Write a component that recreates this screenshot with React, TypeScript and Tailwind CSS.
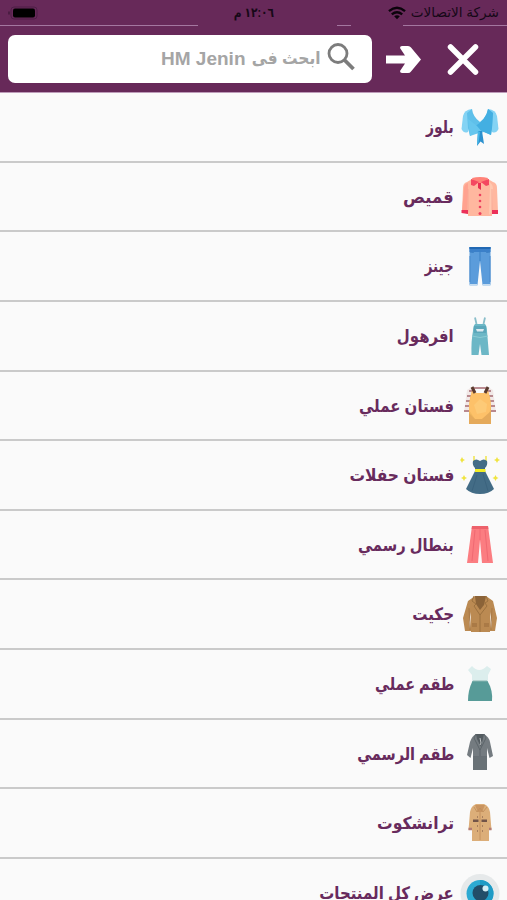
import type { ReactNode } from "react";

type Category = {
	label: string;
	textClass: string;
	icon: ReactNode;
};

const Blouse = () => (
	<>
		<path d="M12 1Q4 2 3 8L1.500 21Q4 26 8 24L11 13Z" fill="#84d3f4" />
		<path d="M28 1Q36 2 37 8L38.500 21Q36 26 32 24L29 13Z" fill="#84d3f4" />
		<path d="M12 1Q13 9 20 14Q27 9 28 1L33 5L32 20L31 27L24 24L20 25L16 24L10 28L8 20L7 5Z" fill="#5fc0ea" />
		<path d="M28 1L33 5L32 20L31 27L24 24L14 19Q26 12 28 1Z" fill="#43afe2" />
		<path d="M8 11L17 18L22 24L10 28Z" fill="#66c6ee" />
		<path d="M18 23L22 23L24 36L20.500 33.500L17 38Z" fill="#2c91ce" />
		<path d="M18 23L20 24L18.500 35L17 37Z" fill="#49b8e8" />
	</>
);

const Shirt = () => (
	<>
		<path d="M12 2L7 5Q3 6 3 11L2 35L8 37V39H32V37L38 35L37 11Q37 6 33 5L28 2Z" fill="#ffb79f" />
		<path d="M8 6Q4 7 4 12L2 34L7 35L8 9Z" fill="#ffa28f" />
		<path d="M29 5Q33 7 33 12L32 34L29 38L30 8Z" fill="#ffc8b0" />
		<path d="M8 12V35M32 12V35" stroke="#f6a28f" strokeWidth=".7" />
		<path d="M12 1Q20 -1 28 1L26 6H14Z" fill="#ff8278" />
		<path d="M11 2L19 5L14 9L11 8ZM29 2L21 5L26 9L29 8Z" fill="#f44760" />
		<path d="M18 6H21V13L18 11Z" fill="#e92f51" />
		<path d="M1.500 33L8 33V37L1.500 36ZM32 33L38 33V37L32 37Z" fill="#eb3059" />
		<g fill="#ed405e">
			<circle cx="20" cy="18" r="1.300" />
			<circle cx="20" cy="24" r="1.300" />
			<circle cx="20" cy="30" r="1.300" />
			<circle cx="20" cy="36.500" r="1.500" />
		</g>
	</>
);

const Jeans = () => (
	<>
		<path d="M9.500 0H30.500V38H22.500L20 14L17.500 38H9.500Z" fill="#5b9cdb" />
		<path d="M9.500 0H30.500V5H9.500Z" fill="#3b80ca" />
		<path d="M9.500 1H30.500" stroke="#2168b3" strokeWidth="2" />
		<path d="M10 5Q14 7 16 3M30 5Q26 7 24 3M20 3V14" fill="none" stroke="#3b80c5" />
		<path d="M10 9V35M30 9V35" stroke="#4889cb" />
		<path d="M9.500 37H17.500V39H9.500ZM22.500 37H30.500V39H22.500Z" fill="#c4dbef" />
	</>
);

const Overalls = () => (
	<>
		<path d="M16.500 7L15 0.500M23.500 7L25 0.500" stroke="#88bdc9" strokeWidth="1.800" />
		<path d="M15 7H25Q27 9 27 14L29 38H21.500L20 27L18.500 38H11.500Q11 24 13 14Q13 9 15 7Z" fill="#6cb7c6" />
		<path d="M14 9H26V16H14Z" fill="#5ba7ba" />
		<path d="M16 12H24L23 14.500H17Z" fill="#dceaf0" />
		<path d="M12 19Q20 22 28 19" fill="none" stroke="#8bcbd4" />
	</>
);

const CasualDress = () => (
	<>
		<path d="M12 1L7 4L4 26H11L13 9M28 1L33 4L36 26H29L27 9" fill="#f1e8e7" />
		<path d="M9 5H13M27 5H31M7 10H12M28 10H33M6 15H11M29 15H34M5 20H10M30 20H35M4 25H9M31 25H36M14 2H26" stroke="#a66a71" strokeWidth="1.700" />
		<path d="M12 5L16 7H24L28 5L30 12L31 20V38H9V20L10 12Z" fill="#f3b95f" />
		<path d="M12 5L16 7H24L28 5L30 12L31 20L29 28L22 33H15L9 24V18Z" fill="#fdc169" />
		<path d="M14 19L20 13L27 18L26 26L17 28Z" fill="#fdca77" />
		<path d="M9 27L15 33H22L31 25V38H9Z" fill="#e5aa5b" />
		<path d="M12 1L15 7M28 1L25 7" stroke="#5a392d" strokeWidth="3" />
	</>
);

const PartyDress = () => (
	<>
		<path d="M14 0V6M26 0V6" stroke="#f0e34e" strokeWidth="1.500" />
		<path d="M13 5Q16 2 20 5Q24 2 27 5Q28 9 25 12V15L34 33Q29 38 20 38Q11 38 6 33L15 15V12Q12 9 13 5Z" fill="#436c86" />
		<path d="M17 19L12 35M23 18L28 35" stroke="#3b637e" strokeWidth="1" />
		<path d="M15 13H25.500V16H15Z" fill="#f2ed24" />
		<path d="M2 1L3 3L5 4L3 5L2 7L1 5L0 4L1 3ZM37 1L38 3L40 4L38 5L37 7L36 5L34 4L36 3ZM4 19L5 21L7 22L5 23L4 25L3 23L1 22L3 21ZM35.500 19L36.500 21L38.500 22L36.500 23L35.500 25L34.500 23L32.500 22L34.500 21Z" fill="#f0e43e" />
	</>
);

const Trousers = () => (
	<>
		<path d="M12 0H28L33 37H22L20 14L18 37H7Z" fill="#fb7d81" />
		<path d="M12 0H28L28.400 3H11.600Z" fill="#ed616b" />
		<path d="M15 4L12 35M25 4L28 35" stroke="#f06972" />
		<path d="M20 3V14" stroke="#f36b75" />
	</>
);

const Jacket = () => (
	<>
		<path d="M15 1H26L33 6L37 23L35 36H30V37H11V36H5L3 23L8 6Z" fill="#bb8a52" />
		<path d="M11 17L10 34L9 27ZM30 17L31 34L32 27Z" fill="#fafafa" />
		<path d="M9 13L10 35M32 13L31 35" stroke="#a27442" strokeWidth=".8" />
		<path d="M15 1H26L24 10L20 15L16 9Z" fill="#8b6338" />
		<path d="M14 1L12 6L16 9L14 11L20 20M26 1L28 6L25 8L27 11L20 20V37" fill="none" stroke="#9c713f" />
		<path d="M12 29H17M24 29H29M12 31H17M24 31H29" stroke="#996b3b" strokeWidth="1.200" />
	</>
);

const CasualSet = () => (
	<>
		<path d="M12 1Q19 9 27 1L31 4L28 10V17H12V10L8 5Z" fill="#dceeed" />
		<path d="M12.500 16H27.500Q33 25 32 36H8Q8 25 12.500 16Z" fill="#579b98" />
		<path d="M13 16H27" stroke="#8ab6b1" />
	</>
);

const FormalSet = () => (
	<>
		<path d="M16 0H24Q29 3 30 8L33 22L29.500 24L27 14V36H13V14L10.500 24L7 21L10 8Q12 2 16 0Z" fill="#747b80" />
		<path d="M16 0H24L21 13L17 5Z" fill="#535b60" />
		<path d="M16 0L14 4L20 16L26 4L24 0M20 15V22M13 23H27" fill="none" stroke="#5c656a" />
		<path d="M13 23H27V36H13Z" fill="#697176" />
		<path d="M20 4L21 9L20 11" fill="none" stroke="#bdc1c2" />
	</>
);

const TrenchCoat = () => (
	<>
		<path d="M16 0H24Q29 2 30 8L31.500 26H29V37H12V26H8.500L10 8Q11 2 16 0Z" fill="#dcae79" />
		<path d="M15 1H25L22 8H18Z" fill="#c99460" />
		<path d="M14 3L17 8L20 4L23 8L27 3M20 8V36" fill="none" stroke="#be8b58" strokeWidth=".8" />
		<path d="M13 15.500H18.500V18H13ZM21.500 15.500H27V18H21.500Z" fill="#725448" />
		<path d="M17 13H18M22 13H23M17 22H18M22 22H23M17 27H18M22 27H23" stroke="#987155" strokeWidth="1.400" />
		<path d="M8.500 25H12M29 25H31.500" stroke="#b37c74" strokeWidth="2.500" />
	</>
);

const Eye = () => (
	<>
		<circle cx="20" cy="19.500" r="19.500" fill="#e6e9ea" />
		<circle cx="20" cy="19.500" r="13.500" fill="#2caad2" />
		<path d="M20 6A13.500 13.500 0 0 1 20 33V27.500A8 8 0 0 0 20 11.500Z" fill="#1f9bc5" />
		<circle cx="20.500" cy="19" r="8" fill="#224d69" />
		<circle cx="25.500" cy="14.500" r="3" fill="#d5eef5" />
	</>
);

const categories: Category[] = [
	{ label: "بلوز", textClass: "scale-x-[.82]", icon: <Blouse /> },
	{ label: "قميص", textClass: "scale-x-[.96]", icon: <Shirt /> },
	{ label: "جينز", textClass: "scale-x-[.79]", icon: <Jeans /> },
	{ label: "افرهول", textClass: "scale-x-[.88]", icon: <Overalls /> },
	{ label: "فستان عملي", textClass: "scale-x-[.88]", icon: <CasualDress /> },
	{ label: "فستان حفلات", textClass: "scale-x-[.91]", icon: <PartyDress /> },
	{ label: "بنطال رسمي", textClass: "scale-x-[.865]", icon: <Trousers /> },
	{ label: "جكيت", textClass: "scale-x-[.89]", icon: <Jacket /> },
	{ label: "طقم عملي", textClass: "scale-x-[.85]", icon: <CasualSet /> },
	{ label: "طقم الرسمي", textClass: "scale-x-[.85]", icon: <FormalSet /> },
	{ label: "ترانشكوت", textClass: "scale-x-[.917]", icon: <TrenchCoat /> },
	{ label: "عرض كل المنتجات", textClass: "scale-x-[.88]", icon: <Eye /> },
];

const StatusBar = () => (
	<div className="grid h-[25px] grid-cols-3 items-center px-2 text-[13px] text-[#160817]">
		<div className="flex items-center gap-[5px] pt-px">
			<span className="text-[13.600px] whitespace-nowrap">شركة الاتصالات</span>
			<svg width="18" height="14" viewBox="0 0 19 14" fill="none" stroke="#0b030b" strokeWidth="2.500" className="shrink-0">
				<path d="M1 5Q9.500 -2 18 5M4 8.500Q9.500 4 15 8.500" />
				<path d="M6.500 10.500Q9.500 8 12.500 10.500L9.500 13.500Z" fill="#0b030b" stroke="none" />
			</svg>
		</div>
		<div className="scale-x-[.82] text-center font-bold">١٢:٠٦ م</div>
		<div className="flex justify-end">
			<svg width="30" height="14" viewBox="0 0 30 14">
				<rect x="3" y="1" width="26" height="12" rx="3" fill="none" stroke="#4e1f47" />
				<rect x="5" y="2.500" width="22" height="9" rx="2" fill="#000" />
				<path d="M1 5.500V8.500" stroke="#421a3c" strokeWidth="1.500" />
			</svg>
		</div>
	</div>
);

const SearchHeader = () => (
	<div className="flex h-[66px] items-center pr-7 pl-2">
		<button type="button" aria-label="إغلاق">
			<svg width="32" height="32" viewBox="0 0 32 32" fill="none" stroke="#fff" strokeWidth="5.500" strokeLinecap="round">
				<path d="M3.500 4L28.500 29M28.500 4L3.500 29" />
			</svg>
		</button>
		<button type="button" aria-label="رجوع" className="mr-[25px]">
			<svg width="36" height="30" viewBox="0 0 36 30" fill="#fff">
				<path d="M0 11.500H19L14 4Q14 2 16 2H22Q24 2 25 3.500L35 15.500L25 27.500Q24 29 22 29H16Q14 29 14 27L19 19.500H0Z" />
			</svg>
		</button>
		<div className="mr-[14px] flex h-[48px] flex-1 items-center rounded-[7px] bg-white pr-[17px] font-bold text-[#a5a5a5]">
			<svg width="28" height="28" viewBox="0 0 28 28" fill="none" stroke="#7c7c7c" className="-mt-1">
				<circle cx="11" cy="10.500" r="9" strokeWidth="2.800" />
				<path d="M17.500 17L26.500 26" strokeWidth="3.800" />
			</svg>
			<span className="mr-[6px] origin-right scale-x-[.91] text-[17px] whitespace-nowrap">ابحث فى</span>
			<span className="text-[19px] whitespace-nowrap">HM Jenin</span>
		</div>
	</div>
);

export default function App() {
	return (
		<div
			dir="rtl"
			className="h-[900px] w-full overflow-hidden bg-[#fafafa] font-['Liberation_Sans','DejaVu_Sans',sans-serif]"
		>
			<header className="h-[93px] border-b border-[#bd9bb9] bg-[#672959]">
				<StatusBar />
				<div className="flex h-px">
					<div className="w-[104px] bg-[#a477a0]" />
					<div className="mr-[52px] w-[14px] bg-[#a477a0]" />
					<div className="mr-auto w-[198px] bg-[#a477a0]" />
				</div>
				<SearchHeader />
			</header>
			<ul>
				{categories.map(({ label, textClass, icon }) => (
					<li
						key={label}
						className="flex h-[69.640px] items-center border-b-2 border-[#cacaca] pt-0.5 pr-[7px]"
					>
						<svg width="40" height="40" viewBox="0 0 40 40" className="shrink-0 overflow-visible">
							{icon}
						</svg>
						<span
							className={`mr-[6px] origin-right text-[17px] font-bold whitespace-nowrap text-[#682b5d] ${textClass}`}
						>
							{label}
						</span>
					</li>
				))}
			</ul>
		</div>
	);
}
